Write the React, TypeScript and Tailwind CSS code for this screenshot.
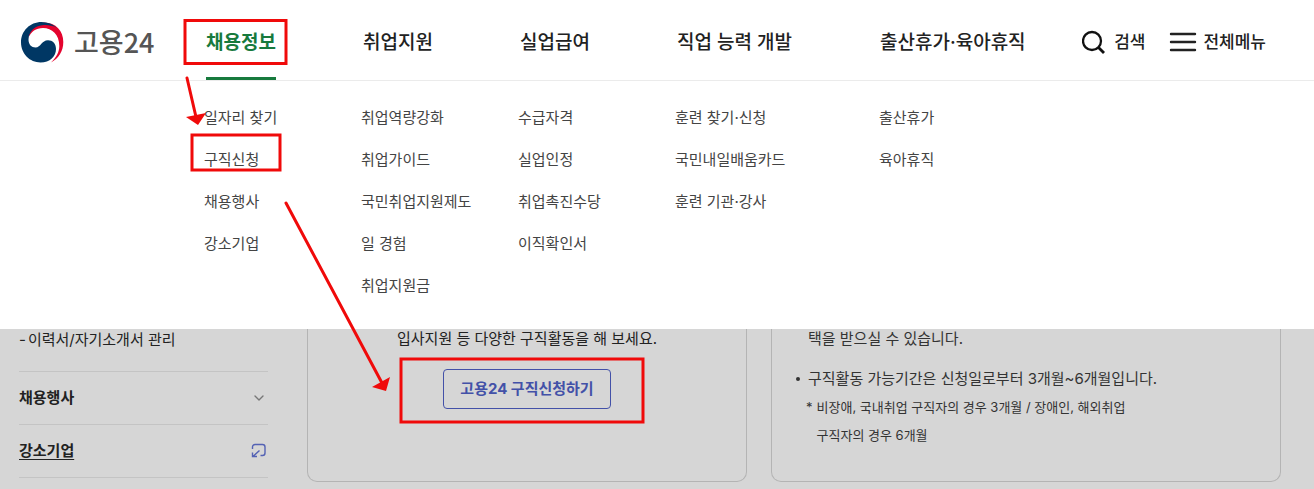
import React from "react";
import { ChevronDown } from "lucide-react";

const menus = [
  {
    title: "채용정보",
    active: true,
    items: ["일자리 찾기", "구직신청", "채용행사", "강소기업"],
  },
  {
    title: "취업지원",
    items: [
      "취업역량강화",
      "취업가이드",
      "국민취업지원제도",
      "일 경험",
      "취업지원금",
    ],
  },
  {
    title: "실업급여",
    items: ["수급자격", "실업인정", "취업촉진수당", "이직확인서"],
  },
  {
    title: "직업 능력 개발",
    items: ["훈련 찾기·신청", "국민내일배움카드", "훈련 기관·강사"],
  },
  {
    title: "출산휴가·육아휴직",
    items: ["출산휴가", "육아휴직"],
  },
];

function Logo() {
  return (
    <a
      href="#"
      className="flex w-[206px] shrink-0 items-center gap-2.5 pt-1 pl-5 font-['Noto_Sans_CJK_KR',sans-serif]"
    >
      <svg className="h-11 w-11" viewBox="0 0 44 44" aria-hidden="true">
        <path
          d="M8.300 18C9 9 15 3 24 2.500C36 2.500 43.300 11 43.300 22C43.300 31.500 38.500 38.500 31 42.500C36.500 37 39.300 32 39.300 26C39.300 14.500 32 8 23 8C16 8 11 11.500 8.300 18Z"
          fill="#e4032e"
        />
        <path
          d="M37 8C33 4 27.500 2 21.500 2C10 2 1 11 1 22.300C1 34 10 42.500 20.500 42.500C30 42.500 36 36.500 36 29C36 23.500 32.500 20.300 28 20.300C21.500 20.300 21 27.500 15.500 27.500C11.500 27.500 8.500 24.500 8.500 19.500C8.500 11.500 15 5.300 24 5C28.500 4.800 33 5.500 37 8Z"
          fill="#003764"
        />
      </svg>
      <span className="text-[27px] leading-10 font-medium text-[#555]">
        고용24
      </span>
    </a>
  );
}

function Header() {
  return (
    <header className="flex h-[81px] items-stretch border-b border-[#ebebeb] bg-white">
      <Logo />
      <nav className="grid flex-1 grid-cols-[157px_157px_157px_203px_1fr]">
        {menus.map((menu) => (
          <a
            key={menu.title}
            href="#"
            className={
              menu.active
                ? "justify-self-start border-b-3 border-[#177a3d] pt-6 text-[19px] leading-[38px] font-bold whitespace-nowrap text-[#177a3d]"
                : "justify-self-start pt-6 text-[19px] leading-[38px] font-medium whitespace-nowrap text-[#222]"
            }
          >
            {menu.title}
          </a>
        ))}
      </nav>
      <div className="flex items-center gap-6 pt-1 pr-12">
        <button className="flex items-center gap-2 text-[17px] font-medium text-[#222]">
          <svg className="h-6 w-6" viewBox="0 0 24 24" fill="none" aria-hidden="true">
            <circle cx="10" cy="11" r="9" stroke="#111" strokeWidth="2.300" />
            <path d="M16.500 17.500L22 23" stroke="#111" strokeWidth="2.800" />
          </svg>
          <span className="pt-0.5">검색</span>
        </button>
        <button className="flex items-center gap-1.5 text-[17px] font-medium text-[#222]">
          <svg className="h-5 w-7" viewBox="0 0 28 20" aria-hidden="true">
            <path
              d="M2 2H26M2 10H26M2 18H26"
              stroke="#222"
              strokeWidth="2.400"
              strokeLinecap="round"
            />
          </svg>
          <span className="pt-0.5">전체메뉴</span>
        </button>
      </div>
    </header>
  );
}

function MegaMenu() {
  return (
    <div className="grid grid-cols-[157px_157px_157px_204px_1fr] bg-white pt-4 pb-[22px] pl-[204px]">
      {menus.map((menu) => (
        <ul key={menu.title}>
          {menu.items.map((item) => (
            <li key={item}>
              <a href="#" className="block text-[15px] leading-[42px] text-[#444]">
                {item}
              </a>
            </li>
          ))}
        </ul>
      ))}
    </div>
  );
}

function Sidebar() {
  return (
    <aside className="text-[15px] text-[#222]">
      <a
        href="#"
        className="flex gap-0.5 border-b border-[#c4c4c4] pb-5 leading-[22px]"
      >
        <span>-</span>
        이력서/자기소개서 관리
      </a>
      <button className="flex h-[53px] w-full items-center justify-between border-b border-[#c4c4c4] pr-px font-bold">
        채용행사
        <ChevronDown className="h-4 w-4 text-[#777]" strokeWidth={2} />
      </button>
      <a
        href="#"
        className="flex h-[53px] items-center justify-between border-b border-[#c4c4c4] pr-px font-bold"
      >
        <span className="underline underline-offset-3">강소기업</span>
        <svg className="h-4 w-4" viewBox="0 0 16 16" fill="none" aria-hidden="true">
          <path
            d="M1.500 6V4C1.500 2.500 2.500 1.500 4 1.500H11.500C13 1.500 14 2.500 14 4V10C14 11.500 13 12.500 11.500 12.500H9.500M8.500 7.500L2 13.500M1.500 9.500V13.500H6"
            stroke="#5462b4"
            strokeWidth="1.400"
          />
        </svg>
      </a>
    </aside>
  );
}

function Content() {
  return (
    <main className="grid grid-cols-[249px_479fr_534fr] pr-[33px] pl-[19px]">
      <Sidebar />
      <section className="ml-[39px] flex h-[153px] flex-col items-center rounded-b-[10px] border border-t-0 border-[#b4b4b4]">
        <p className="text-[15px] leading-5 text-[#222]">
          입사지원 등 다양한 구직활동을 해 보세요.
        </p>
        <button className="mt-5 h-10 rounded border border-[#4351a8] px-4 text-[15px] font-bold text-[#4351a8]">
          고용24 구직신청하기
        </button>
      </section>
      <section className="ml-6 h-[153px] rounded-b-[10px] border border-t-0 border-[#b4b4b4] pl-6 text-[#333]">
        <p className="pl-3 text-[15px] leading-5">택을 받으실 수 있습니다.</p>
        <p className="flex items-center gap-2 pt-5 text-[15px] leading-5">
          <span className="h-1 w-1 rounded-full bg-[#333]" />
          구직활동 가능기간은 신청일로부터 3개월~6개월입니다.
        </p>
        <p className="flex gap-1 pt-1 pl-2.5 text-[13px] leading-7">
          <span>*</span>
          <span>
            비장애, 국내취업 구직자의 경우 3개월 / 장애인, 해외취업
            <br />
            구직자의 경우 6개월
          </span>
        </p>
      </section>
    </main>
  );
}

// red boxes and arrows that walk through the steps
function Guide() {
  return (
    <svg
      className="pointer-events-none absolute top-0 left-0 h-[489px] w-[700px]"
      viewBox="0 0 700 489"
      fill="none"
      aria-hidden="true"
    >
      <g stroke="#f00a0a" strokeWidth="3">
        <rect x="185" y="20.500" width="101" height="43" />
        <rect x="192" y="135" width="88" height="35" />
        <rect x="401" y="359" width="242" height="63" />
        <path d="M187 78L196 117M286 203L382 383" strokeLinecap="round" />
      </g>
      <path d="M186 117L206 113L198 125ZM372 387L390 377L386 391Z" fill="#f00a0a" />
    </svg>
  );
}

export default function App() {
  return (
    <div className="relative min-h-screen bg-[#d6d6d6] font-['Inter','Noto_Sans_CJK_KR',sans-serif]">
      <Header />
      <MegaMenu />
      <Content />
      <Guide />
    </div>
  );
}
